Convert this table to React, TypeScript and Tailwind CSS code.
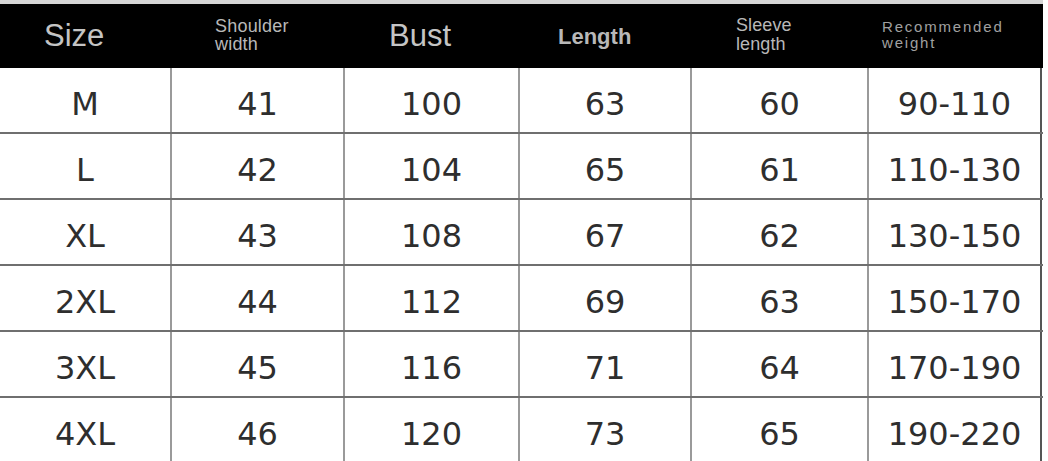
const cols = ["w-[172px]", "w-[173px]", "w-[175px]", "w-[172px]", "w-[177px]", "w-[173px]"];

const rows = [
  ["M", "41", "100", "63", "60", "90-110"],
  ["L", "42", "104", "65", "61", "110-130"],
  ["XL", "43", "108", "67", "62", "130-150"],
  ["2XL", "44", "112", "69", "63", "150-170"],
  ["3XL", "45", "116", "71", "64", "170-190"],
  ["4XL", "46", "120", "73", "65", "190-220"],
];

export default function App() {
  return (
    <div className="h-[461px] w-[1048px] overflow-hidden bg-white">
      <div className="h-[4px] w-[1043px] bg-[#d6d6d6]" />
      <div className="flex h-[64px] w-[1043px] bg-black font-['Liberation_Sans',Arial,sans-serif] text-[#c4c4c4]">
        <div className={`${cols[0]} flex items-center pl-[44px] text-[31px]`}>Size</div>
        <div className={`${cols[1]} flex flex-col justify-center pb-[2px] pl-[43px] text-[18px] leading-[18px] tracking-[0.2px] text-[#b8b8b8]`}>
          <span>Shoulder</span>
          <span>width</span>
        </div>
        <div className={`${cols[2]} flex items-center pl-[44px] text-[31px]`}>Bust</div>
        <div className={`${cols[3]} flex items-center pl-[38px] text-[22px] font-bold text-[#b8b8b8]`}>Length</div>
        <div className={`${cols[4]} flex flex-col justify-center pb-[2px] pl-[44px] text-[18px] leading-[19px] tracking-[0.1px] text-[#b8b8b8]`}>
          <span>Sleeve</span>
          <span>length</span>
        </div>
        <div className={`${cols[5]} flex flex-col justify-center pb-[2px] pl-[13px] text-[15px] leading-[16px] tracking-[1.8px] text-[#a0a0a0]`}>
          <span>Recommended</span>
          <span>weight</span>
        </div>
      </div>
      <div className="w-[1043px] font-['DejaVu_Sans',Verdana,sans-serif] text-[32px] text-[#2e2e2e]">
        {rows.map((row, i) => (
          <div key={i} className="flex h-[66px] border-b-2 border-[#6f6f6f]">
            {row.map((v, j) => (
              <div
                key={j}
                className={`${cols[j]} flex items-center justify-center pt-[7px] border-r-2 ${j === 5 ? "border-[#555]" : "border-[#9a9a9a]"}`}
              >
                {v}
              </div>
            ))}
          </div>
        ))}
      </div>
    </div>
  );
}
